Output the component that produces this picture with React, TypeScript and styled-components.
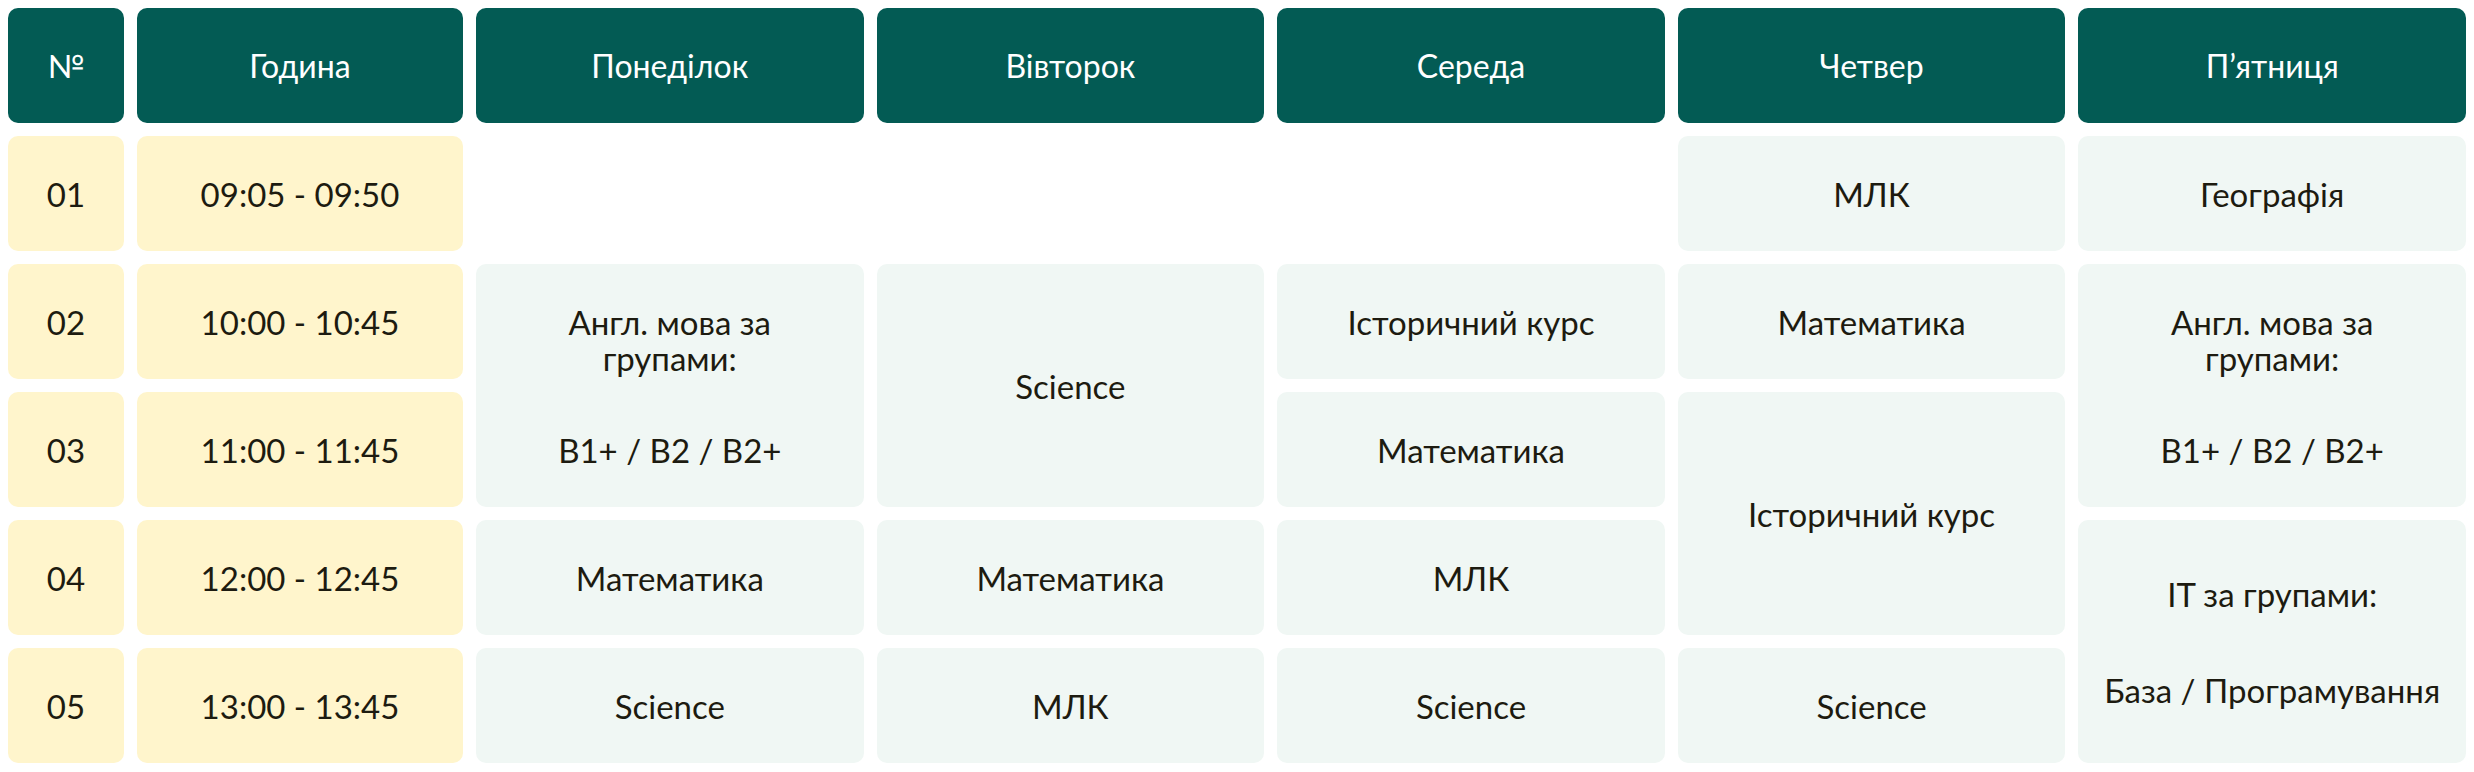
import React from 'react'
import styled, { createGlobalStyle, css } from 'styled-components'

const GlobalStyle = createGlobalStyle`
    html, body {
        margin: 0;
        padding: 0;
        background: #ffffff;
    }
    body {
        font-family: Lato, "Noto Sans", sans-serif;
        color: #1d1b10;
    }
`

const Page = styled.div`
    padding: 8px;
`

const Grid = styled.div`
    display: grid;
    grid-template-columns: 116px 326px repeat(5, 1fr);
    grid-template-rows: repeat(6, 115px);
    column-gap: 13px;
    row-gap: 13px;
`

type Kind = 'head' | 'time' | 'lesson'

const Cell = styled.div<{ $kind: Kind; $span?: number }>`
    display: flex;
    flex-direction: column;
    align-items: center;
    justify-content: center;
    text-align: center;
    border-radius: 10px;
    font-size: 33px;
    line-height: 36px;
    grid-row: span ${(p) => p.$span || 1};
    ${(p) =>
        p.$kind === 'head' &&
        css`
            background: #035b54;
            color: #ffffff;
            font-size: 32px;
        `}
    ${(p) =>
        p.$kind === 'time' &&
        css`
            background: #fff5cc;
            color: #1d1b10;
        `}
    ${(p) =>
        p.$kind === 'lesson' &&
        css`
            background: #f0f7f4;
            color: #1d1b10;
        `}
`

const Blank = styled.div``

const Lines = styled.div<{ $gap: number }>`
    display: flex;
    flex-direction: column;
    align-items: center;
    gap: ${(p) => p.$gap}px;
`

const heads = ['№', 'Година', 'Понеділок', 'Вівторок', 'Середа', 'Четвер', 'П’ятниця']

const Groups = ({ top, bottom, gap }: { top: React.ReactNode; bottom: string; gap: number }) => (
    <Lines $gap={gap}>
        <div>{top}</div>
        <div>{bottom}</div>
    </Lines>
)

const english = <>Англ. мова за<br />групами:</>

export default function App() {
    return (
        <Page>
            <GlobalStyle />
            <Grid>
                {heads.map((h) => (
                    <Cell key={h} $kind="head">{h}</Cell>
                ))}

                {/* 1 */}
                <Cell $kind="time">01</Cell>
                <Cell $kind="time">09:05 - 09:50</Cell>
                <Blank />
                <Blank />
                <Blank />
                <Cell $kind="lesson">МЛК</Cell>
                <Cell $kind="lesson">Географія</Cell>

                {/* 2 */}
                <Cell $kind="time">02</Cell>
                <Cell $kind="time">10:00 - 10:45</Cell>
                <Cell $kind="lesson" $span={2}>
                    <Groups top={english} bottom="B1+ / B2 / B2+" gap={56} />
                </Cell>
                <Cell $kind="lesson" $span={2}>Science</Cell>
                <Cell $kind="lesson">Історичний курс</Cell>
                <Cell $kind="lesson">Математика</Cell>
                <Cell $kind="lesson" $span={2}>
                    <Groups top={english} bottom="B1+ / B2 / B2+" gap={56} />
                </Cell>

                {/* 3 */}
                <Cell $kind="time">03</Cell>
                <Cell $kind="time">11:00 - 11:45</Cell>
                <Cell $kind="lesson">Математика</Cell>
                <Cell $kind="lesson" $span={2}>Історичний курс</Cell>

                {/* 4 */}
                <Cell $kind="time">04</Cell>
                <Cell $kind="time">12:00 - 12:45</Cell>
                <Cell $kind="lesson">Математика</Cell>
                <Cell $kind="lesson">Математика</Cell>
                <Cell $kind="lesson">МЛК</Cell>
                <Cell $kind="lesson" $span={2}>
                    <Groups top="IT за групами:" bottom="База / Програмування" gap={60} />
                </Cell>

                {/* 5 */}
                <Cell $kind="time">05</Cell>
                <Cell $kind="time">13:00 - 13:45</Cell>
                <Cell $kind="lesson">Science</Cell>
                <Cell $kind="lesson">МЛК</Cell>
                <Cell $kind="lesson">Science</Cell>
                <Cell $kind="lesson">Science</Cell>
            </Grid>
        </Page>
    )
}
